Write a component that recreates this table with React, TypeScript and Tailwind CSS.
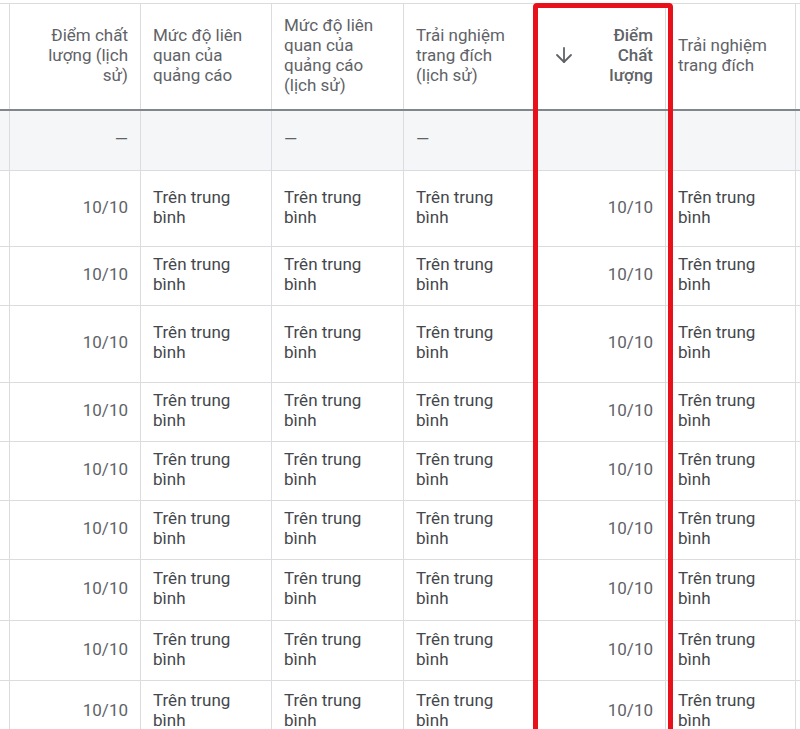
import { ArrowDown } from "lucide-react";

const line = "border-r border-[#dadce0]";
// column widths include the 1px right rule
const widths = ["w-[10px]", "w-[131px]", "w-[131px]", "w-[132px]", "w-[132px]", "w-[130px]", "w-[130px]", "flex-1"];

const rowHeights = ["h-[76px]", "h-[59px]", "h-[77px]", "h-[59px]", "h-[59px]", "h-[59px]", "h-[61px]", "h-[60px]", "h-[62px]"];

function Cell({ col, right, children }: { col: number; right?: boolean; children?: React.ReactNode }) {
	const edge = col === 0 || col === 7;
	return (
		<div
			className={`${widths[col]} shrink-0 ${col < 7 ? line : ""} flex items-center pb-1 ${edge ? "" : "px-3"} ${right ? "justify-end text-right" : "justify-start text-left"}`}
		>
			{children}
		</div>
	);
}

function Lines({ items }: { items: string[] }) {
	return (
		<div>
			{items.map((t, i) => (
				<div key={i}>{t}</div>
			))}
		</div>
	);
}

const avg = <Lines items={["Trên trung", "bình"]} />;

function BodyRow({ h }: { h: string }) {
	return (
		<div className={`flex ${h} border-b border-[#dadce0]`}>
			<Cell col={0} />
			<Cell col={1} right>
				<span className="text-[#5f6368]">10/10</span>
			</Cell>
			<Cell col={2}>{avg}</Cell>
			<Cell col={3}>{avg}</Cell>
			<Cell col={4}>{avg}</Cell>
			<Cell col={5} right>
				<span className="text-[#5f6368]">10/10</span>
			</Cell>
			<Cell col={6}>{avg}</Cell>
			<Cell col={7} />
		</div>
	);
}

export default function App() {
	return (
		<div className="relative w-[800px] h-[729px] overflow-hidden bg-white pt-[3px] font-['Roboto',sans-serif] text-[17px] leading-[20px] text-[#44474c]">
			<div className="border-t border-[#dadce0]">
				{/* header */}
				<div className="flex h-[107px] border-b-2 border-[#80868b] text-[#5f6368]">
					<Cell col={0} />
					<Cell col={1} right>
						<Lines items={["Điểm chất", "lượng (lịch", "sử)"]} />
					</Cell>
					<Cell col={2}>
						<Lines items={["Mức độ liên", "quan của", "quảng cáo"]} />
					</Cell>
					<Cell col={3}>
						<Lines items={["Mức độ liên", "quan của", "quảng cáo", "(lịch sử)"]} />
					</Cell>
					<Cell col={4}>
						<Lines items={["Trải nghiệm", "trang đích", "(lịch sử)"]} />
					</Cell>
					<div className={`${widths[5]} shrink-0 ${line} flex items-center justify-between pb-1 pl-4 pr-3`}>
						<ArrowDown size={24} strokeWidth={1.8} className="text-[#5f6368]" />
						<div className="text-right font-medium text-[#5f6368]">
							<div>Điểm</div>
							<div>Chất</div>
							<div>lượng</div>
						</div>
					</div>
					<Cell col={6}>
						<Lines items={["Trải nghiệm", "trang đích"]} />
					</Cell>
					<Cell col={7} />
				</div>

				{/* totals row */}
				<div className="flex h-[60px] border-b border-[#dadce0] bg-[#f5f6f8] text-[#5f6368]">
					<Cell col={0} />
					<Cell col={1} right>—</Cell>
					<Cell col={2} />
					<Cell col={3}>—</Cell>
					<Cell col={4}>—</Cell>
					<Cell col={5} />
					<Cell col={6} />
					<Cell col={7} />
				</div>

				{rowHeights.map((h, i) => (
					<BodyRow key={i} h={h} />
				))}
			</div>

			{/* highlight around the sorted column */}
			<div className="absolute left-[533px] top-[3px] w-[140px] h-[780px] border-[5px] border-[#e8111b] rounded-[4px]" />
		</div>
	);
}
